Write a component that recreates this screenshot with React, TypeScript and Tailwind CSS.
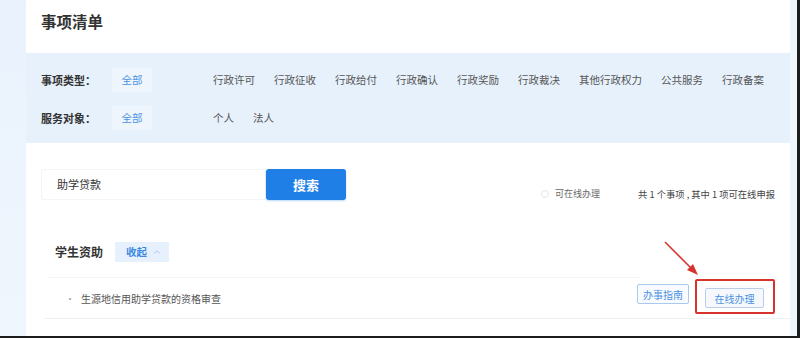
import { ChevronUp } from 'lucide-react'

const types = ['行政许可', '行政征收', '行政给付', '行政确认', '行政奖励', '行政裁决', '其他行政权力', '公共服务', '行政备案']
const targets = ['个人', '法人']

const FilterRow = ({ label, items }: { label: string; items: string[] }) => (
  <div className="flex h-[24px] items-center">
    <span className="w-[71px] text-[11px] font-semibold text-[#333]">{label}</span>
    <span className="flex h-[24px] w-[40px] items-center justify-center bg-[#eef5fd] text-[10.5px] text-[#4d94e3]">全部</span>
    <div className="ml-[61px] flex gap-[19px] text-[10.5px] text-[#555]">
      {items.map((t) => (
        <span key={t} className="cursor-pointer">{t}</span>
      ))}
    </div>
  </div>
)

export default function App() {
  return (
    <div
      className="relative flex h-[338px] w-[800px] overflow-hidden border-b-2 border-r-[3px] border-[#1c1c1c] bg-[#eef5fd]"
      style={{ fontFamily: '"Noto Sans CJK SC", "Noto Sans", sans-serif' }}
    >
      <div className="w-[26px] shrink-0 bg-gradient-to-b from-[#e9f2fd] to-[#f0f6fd]" />

      <div className="flex w-[764px] shrink-0 flex-col bg-white">
        {/* 标题 */}
        <div className="h-[53px] pl-[15px] pt-[9px] text-[15.5px] font-bold leading-[24px] text-[#333]">事项清单</div>

        {/* 筛选 */}
        <div className="flex h-[90px] flex-col gap-[14px] bg-[#e7f1fc] pl-[15px] pt-[15px]">
          <FilterRow label="事项类型：" items={types} />
          <FilterRow label="服务对象：" items={targets} />
        </div>

        {/* 搜索 */}
        <div className="mt-[26px] flex h-[31px] pl-[15px] pr-[15px]">
          <div className="flex w-[225px] items-center rounded-l-[2px] border border-[#f3f5f8] pl-[15px] text-[11px] text-[#333]">
            助学贷款
          </div>
          <button className="w-[80px] rounded-[3px] bg-[#1f7fe6] text-[13px] font-bold text-white shadow-[0_1px_2px_rgba(31,127,230,0.3)]">
            搜索
          </button>
          <div className="ml-auto flex items-center self-start pt-[19px] text-[9px] leading-[12px]">
            <span className="h-[8px] w-[8px] rounded-full border border-[#e3e6ea]" />
            <span className="ml-[6px] text-[#666]">可在线办理</span>
            <span className="ml-[38px] whitespace-pre text-[9.3px] text-[#444]">共 1 个事项 , 其中 1 项可在线申报</span>
          </div>
        </div>

        {/* 分类 */}
        <div className="mt-[42px] flex h-[20px] items-center pl-[29px]">
          <span className="text-[12px] font-bold text-[#333]">学生资助</span>
          <span className="ml-[12px] flex h-[20px] w-[54px] items-center bg-[#e6f1fd] pl-[11px] text-[10.5px] font-semibold text-[#3d8ae0]">
            收起
            <ChevronUp className="ml-[5px] h-[10px] w-[10px] text-[#9cc2ec]" strokeWidth={2} />
          </span>
        </div>
        <div className="ml-[21px] mr-[150px] mt-[15px] border-t border-[#f1f3f6]" />

        <div className="flex h-[40px] items-center pl-[39px] pr-[26px]">
          <span className="text-[10px] text-[#9ab]">•</span>
          <span className="ml-[6px] text-[10px] text-[#555]">生源地信用助学贷款的资格审查</span>
          <div className="ml-auto flex items-start">
            <button className="-mt-[4px] h-[20px] w-[52px] rounded-[2px] border border-[#a9c9ee] bg-[#f8fbff] text-[10px] text-[#4a8fe0]">
              办事指南
            </button>
            <button className="ml-[16px] h-[20px] w-[59px] rounded-[2px] border border-[#b9cfe9] bg-[#f5f9fe] text-[10px] text-[#4a8fe0]">
              在线办理
            </button>
          </div>
        </div>
        <div className="ml-[18px] border-t border-[#eef1f5]" />
      </div>

      <div className="flex-1 bg-[#f0f6fd]" />

      {/* 标注 */}
      <div className="pointer-events-none absolute left-[695px] top-[279px] h-[35px] w-[80px] rounded-[2px] border-2 border-[#d8322d]" />
      <svg className="pointer-events-none absolute left-[660px] top-[238px]" width="45" height="42" viewBox="0 0 45 42">
        <line x1="5" y1="4" x2="33" y2="32" stroke="#d8342f" strokeWidth="1.6" />
        <polygon points="38,37 27,32 33,26" fill="#d8342f" />
      </svg>
    </div>
  )
}
